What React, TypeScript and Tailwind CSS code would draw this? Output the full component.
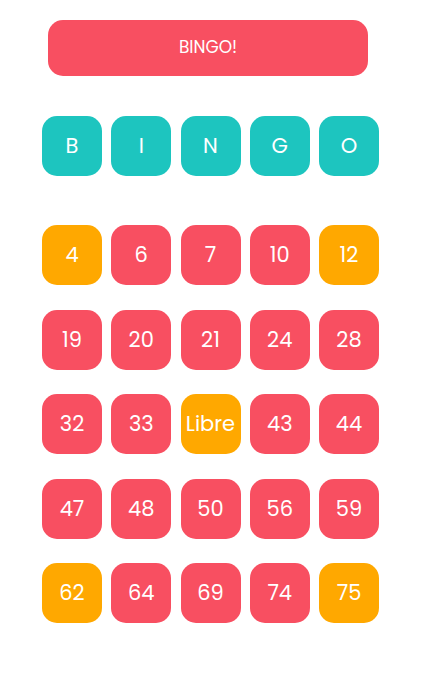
const letters = ['B', 'I', 'N', 'G', 'O'];

const rows = [
  ['4', '6', '7', '10', '12'],
  ['19', '20', '21', '24', '28'],
  ['32', '33', 'Libre', '43', '44'],
  ['47', '48', '50', '56', '59'],
  ['62', '64', '69', '74', '75'],
];

const marked = new Set(['4', '12', 'Libre', '62', '75']);

export default function App() {
  return (
    <main className="min-h-screen bg-white pt-5 pb-12 font-[Poppins,Inter,'Open_Sans',sans-serif] text-white">
      <div className="mx-auto w-[341px] pr-1">
        <button type="button" className="ml-1.5 block h-14 w-80 rounded-[15px] bg-[#f84f61] text-[17px]">
          BINGO!
        </button>
        <div className="mt-10 flex justify-between">
          {letters.map((letter) => (
            <div key={letter} className="flex size-[60px] items-center justify-center rounded-[15px] bg-[#1dc5bf] text-[21px]">
              {letter}
            </div>
          ))}
        </div>
        <div className="mt-[49px] flex h-[398px] flex-col justify-between">
          {rows.map((row) => (
            <div key={row[0]} className="flex justify-between">
              {row.map((value) => (
                <button
                  key={value}
                  type="button"
                  className={`flex size-[60px] items-center justify-center rounded-[15px] text-[21px] ${marked.has(value) ? 'bg-[#ffa800]' : 'bg-[#f84f61]'}`}
                >
                  {value}
                </button>
              ))}
            </div>
          ))}
        </div>
      </div>
    </main>
  );
}
